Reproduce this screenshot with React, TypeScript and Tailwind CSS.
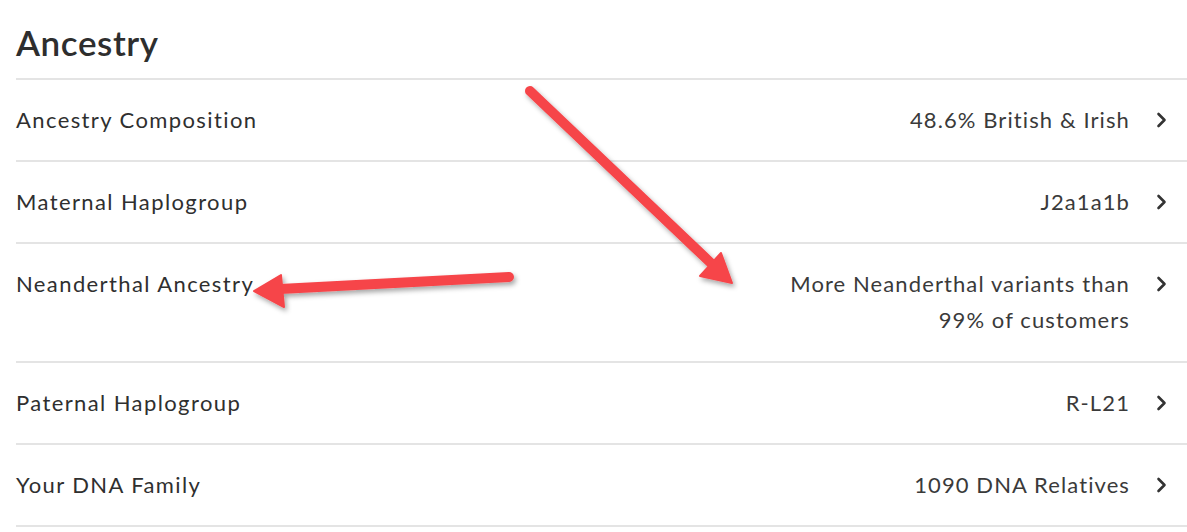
const ROWS = [
  { label: 'Ancestry Composition', value: ['48.6% British & Irish'] },
  { label: 'Maternal Haplogroup', value: ['J2a1a1b'] },
  { label: 'Neanderthal Ancestry', value: ['More Neanderthal variants than', '99% of customers'] },
  { label: 'Paternal Haplogroup', value: ['R-L21'] },
  { label: 'Your DNA Family', value: ['1090 DNA Relatives'] },
];

function Chevron() {
  return (
    <svg width="12" height="16" viewBox="0 0 12 16" fill="none" className="shrink-0 mt-[10px]">
      <path d="M2.5 2 L8.5 8 L2.5 14" stroke="#333" strokeWidth="2.6" strokeLinecap="round" strokeLinejoin="round" />
    </svg>
  );
}

function Arrows() {
  return (
    <svg
      className="absolute inset-0 pointer-events-none"
      width="1187"
      height="532"
      viewBox="0 0 1187 532"
      aria-hidden="true"
    >
      <defs>
        <filter id="shadow" x="-20%" y="-20%" width="140%" height="140%">
          <feDropShadow dx="2" dy="3" stdDeviation="2.5" floodColor="#000" floodOpacity="0.35" />
        </filter>
      </defs>
      <g filter="url(#shadow)" fill="#f6454a" stroke="#f6454a" strokeLinecap="round" strokeLinejoin="round">
        {/* diagonal arrow */}
        <line x1="530" y1="91" x2="714" y2="266" strokeWidth="10" />
        <polygon points="732,283 700,276 721,253" strokeWidth="2" />
        {/* horizontal arrow */}
        <line x1="509" y1="277" x2="280" y2="289" strokeWidth="10" />
        <polygon points="254,291 281,275 284,307" strokeWidth="2" />
      </g>
    </svg>
  );
}

export default function App() {
  return (
    <div
      className="relative w-[1187px] h-[532px] overflow-hidden bg-white text-[#333]"
      style={{ fontFamily: 'Lato, "Noto Sans", sans-serif' }}
    >
      <div className="pl-4">
        <h1 className="pt-[20px] pb-[13px] text-[35px] leading-[45px] font-semibold tracking-[0.6px] text-[#2e2e2e] border-b-2 border-[#e4e4e4]">
          Ancestry
        </h1>

        {ROWS.map(({ label, value }) => (
          <div
            key={label}
            className={`flex items-start justify-between pr-[19px] pt-[22px] border-b-2 border-[#e4e4e4] ${value.length > 1 ? 'pb-[23px]' : 'pb-[22px]'}`}
          >
            <span className="text-[22px] leading-[36px] tracking-[1.4px] text-[#2f2f2f]">{label}</span>
            <div className="flex items-start gap-[26px]">
              <div className="text-right text-[22px] leading-[36px] tracking-[1.1px] text-[#3a3a3a]">
                {value.map((line) => (
                  <div key={line}>{line}</div>
                ))}
              </div>
              <Chevron />
            </div>
          </div>
        ))}
      </div>

      <Arrows />
    </div>
  );
}
